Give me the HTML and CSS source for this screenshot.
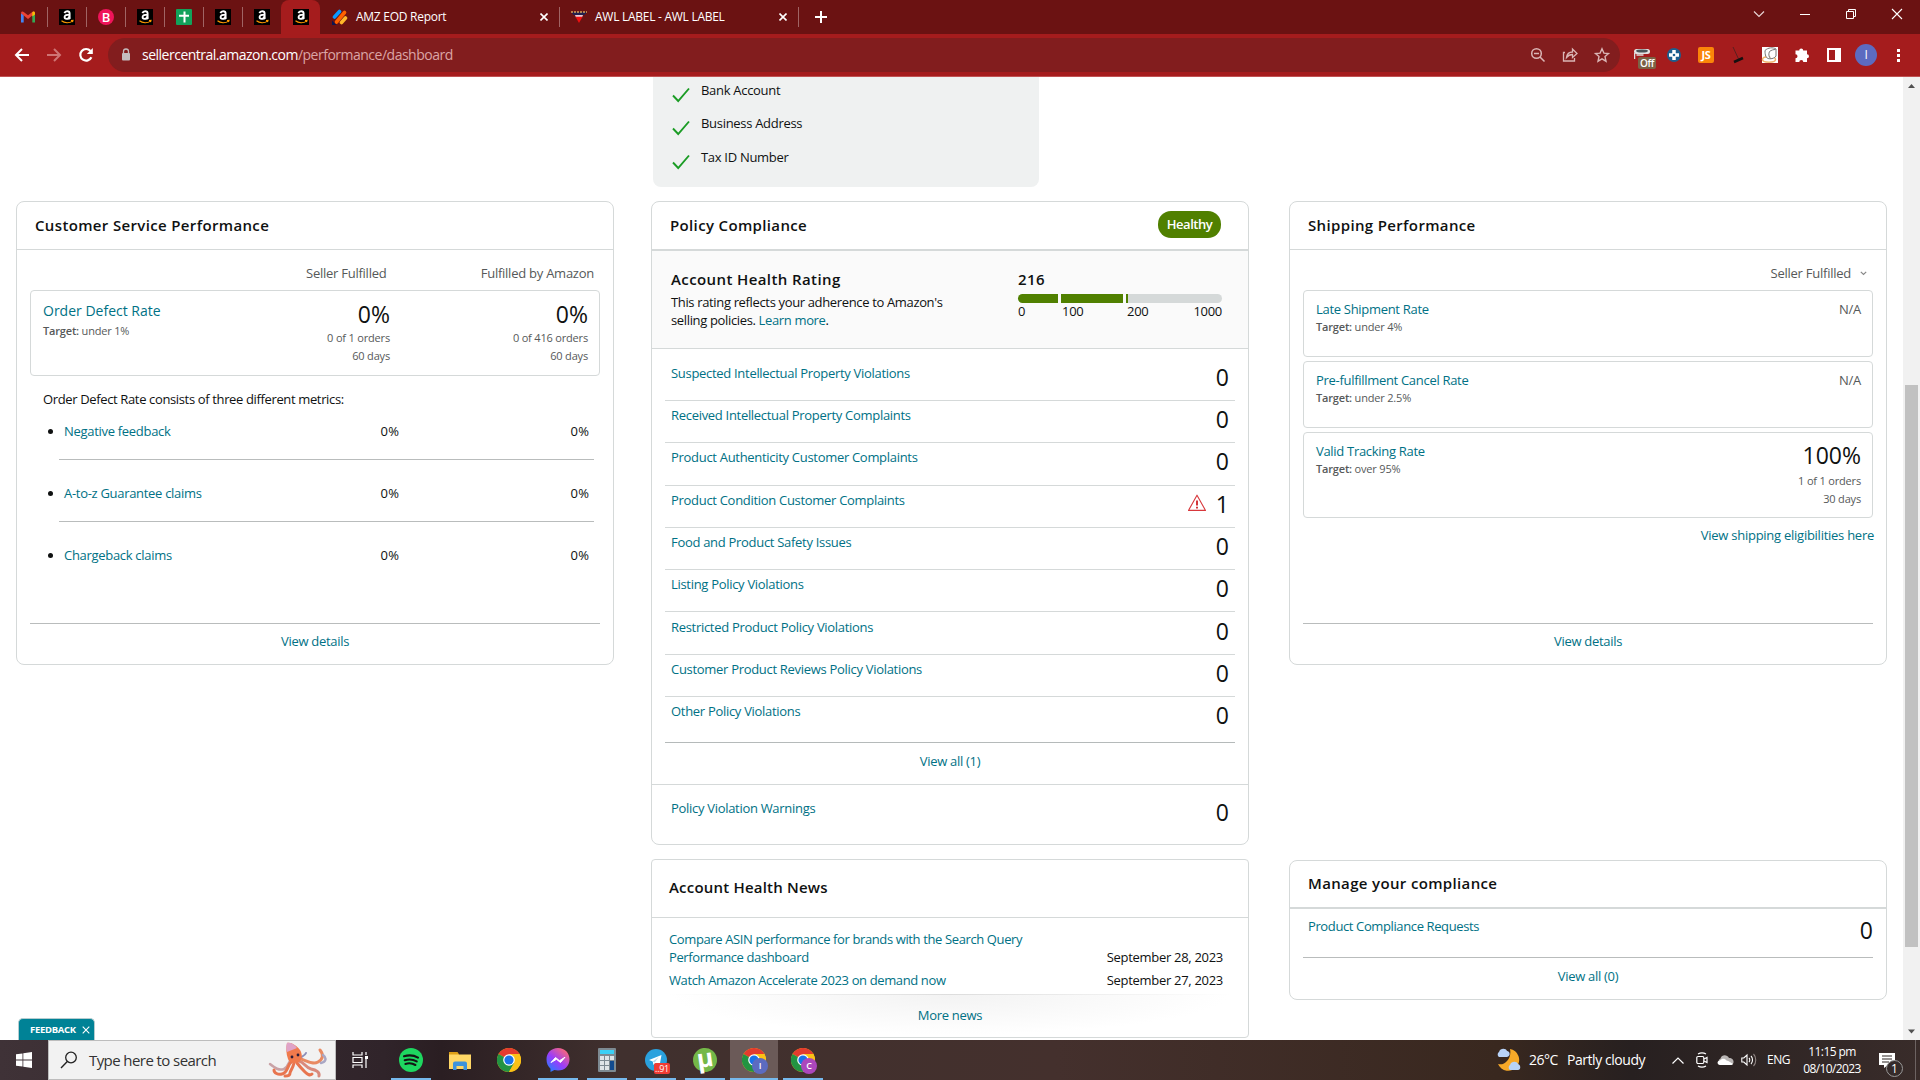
FILE: index.html
```html
<!DOCTYPE html>
<html lang="en">
<head>
  <meta charset="UTF-8">
  <meta name="viewport" content="width=device-width, initial-scale=1.0">
  <title>Account Health</title>
  <link rel="stylesheet" href="styles.css">
</head>
<body>
  <!-- Shared icons -->
  <svg class="sprite" aria-hidden="true">
    <symbol id="amazon" viewBox="0 0 16 16">
      <rect width="16" height="16" fill="#000"/>
      <path d="M5.4 4.2C5.9 2.9 7 2.3 8.2 2.3c1.6 0 2.4.9 2.4 2.3v3.6c0 .8.2 1.2.6 1.7M10.4 5.6C7.6 5.6 5.6 6.3 5.6 8.100c0 1.2.8 1.8 1.8 1.8 1.5 0 3-1.1 3-3" fill="none" stroke="#fff" stroke-width="1.9"/>
      <path d="M2.5 11.8c3 2.4 8 2.6 11 .3M12 11.500l2-.1-.5 1.800" fill="none" stroke="#f90" stroke-width="1.1"/>
    </symbol>
    <symbol id="check" viewBox="0 0 18 16">
      <path d="M1 8.5l5.200 5.500L17 1.500" fill="none" stroke="#1a9c24" stroke-width="1.9"/>
    </symbol>
    <symbol id="chrome" viewBox="0 0 24 24">
      <circle cx="12" cy="12" r="12" fill="#fbc116"/>
      <path d="M12 12L1.600 6A12 12 0 0 1 22.400 6z" fill="#e33b2e"/>
      <path d="M1.600 6A12 12 0 0 0 12 24l5.200-9z" fill="#229342"/>
      <path d="M12 6h10.400A12 12 0 0 1 12 24l5.200-9z" fill="#fbc116"/>
      <circle cx="12" cy="12" r="5.800" fill="#fff"/>
      <circle cx="12" cy="12" r="4.600" fill="#1a73e8"/>
    </symbol>
  </svg>

  <!-- Browser tabs -->
  <div class="tab-strip">
    <div class="pinned">
      <svg width="16" height="16" viewBox="0 0 16 16"><path d="M1 13.500V4l2.700 2v7.500z" fill="#4285f4"/><path d="M15 13.500V4l-2.700 2v7.500z" fill="#34a853"/><path d="M1 4.300C1 2.500 2.600 2 3.700 3L8 6.200 12.300 3C13.400 2 15 2.500 15 4.300L8 10z" fill="#ea4335"/><path d="M12.300 3C13.400 2 15 2.500 15 4.300V5.500l-2.700 2z" fill="#fbbc04"/></svg>
    </div>
    <div class="pinned"><svg width="16" height="16"><use href="#amazon"/></svg></div>
    <div class="pinned"><span class="fav-b">B</span></div>
    <div class="pinned"><svg width="16" height="16"><use href="#amazon"/></svg></div>
    <div class="pinned">
      <svg width="16" height="16" viewBox="0 0 16 16"><rect width="16" height="16" rx="1" fill="#12a25b"/><path d="M8.500 2.500v11M3 6.800h10" stroke="#fff" stroke-width="2"/></svg>
    </div>
    <div class="pinned"><svg width="16" height="16"><use href="#amazon"/></svg></div>
    <div class="pinned last"><svg width="16" height="16"><use href="#amazon"/></svg></div>
    <div class="pinned active"><svg width="16" height="16"><use href="#amazon"/></svg></div>
    <div class="tab first">
      <svg width="16" height="16" viewBox="0 0 16 16"><g stroke-width="3.600" stroke-linecap="round"><path d="M2.500 8l5-5.500" stroke="#0a99ff"/><path d="M4.500 13l8-9.500" stroke="#ff6100"/><path d="M9.500 13.500l4-4.500" stroke="#ffb629"/></g><path d="M0 11.500L4.500 16H0z" fill="#0a1551"/></svg>
      <span class="tab-name">AMZ EOD Report</span>
      <svg class="tab-close" width="8" height="8" viewBox="0 0 8 8"><path d="M.5.5l7 7M7.500.5l-7 7" stroke="#fff" stroke-width="1.600"/></svg>
    </div>
    <div class="tab">
      <svg width="16" height="16" viewBox="0 0 16 16"><path d="M0 3h16l-2.500 3h-11z" fill="#23204d"/><path d="M0 3h16" stroke="#d7a45a" stroke-width="1.500" stroke-dasharray="2 1"/><path d="M4 6h8l-1 2.500H5z" fill="#e9c8d4"/><path d="M4.500 7.800h7L8 14z" fill="#f01010"/></svg>
      <span class="tab-name">AWL LABEL - AWL LABEL</span>
      <svg class="tab-close" width="8" height="8" viewBox="0 0 8 8"><path d="M.5.5l7 7M7.500.5l-7 7" stroke="#fff" stroke-width="1.600"/></svg>
    </div>
    <svg class="new-tab" width="12" height="12" viewBox="0 0 12 12"><path d="M6 0v12M0 6h12" stroke="#fff" stroke-width="2"/></svg>
    <div class="window-controls">
      <svg width="46" height="28" viewBox="0 0 46 28"><path d="M18 11.500l5 5 5-5" fill="none" stroke="#e8d4d4" stroke-width="1.200"/></svg>
      <svg width="46" height="28" viewBox="0 0 46 28"><path d="M18 14.500h10" stroke="#fff"/></svg>
      <svg width="46" height="28" viewBox="0 0 46 28"><path d="M18.500 11.500h7v7h-7zM20.500 11.500v-2h7v7h-2" fill="none" stroke="#fff"/></svg>
      <svg width="46" height="28" viewBox="0 0 46 28"><path d="M18 9l10 10M28 9L18 19" stroke="#fff" stroke-width="1.100"/></svg>
    </div>
  </div>

  <!-- Address bar -->
  <div class="toolbar">
    <div class="nav-buttons">
      <svg width="32" height="32" viewBox="0 0 32 32"><path d="M23 16H10.500M16 10l-6 6 6 6" fill="none" stroke="#fff" stroke-width="2"/></svg>
      <svg width="32" height="32" viewBox="0 0 32 32"><path d="M9 16h12.500M16 10l6 6-6 6" fill="none" stroke="#cf7474" stroke-width="2"/></svg>
      <svg width="32" height="32" viewBox="0 0 32 32"><path d="M21.400 18.200A5.800 5.800 0 1 1 20.500 12" fill="none" stroke="#fff" stroke-width="2.200"/><path d="M22.800 9v6h-6z" fill="#fff"/></svg>
    </div>
    <div class="omnibox">
      <svg width="10" height="14" viewBox="0 0 10 14"><rect x="1" y="5" width="8" height="7.500" rx="1" fill="#c4bcbe"/><path d="M2.500 5.500V3.500a2.500 2.500 0 0 1 5 0v2" fill="none" stroke="#c4bcbe" stroke-width="1.300"/></svg>
      <span class="url">sellercentral.amazon.com<span class="path">/performance/dashboard</span></span>
      <div class="omni-actions">
        <svg width="32" height="32" viewBox="0 0 32 32"><g fill="none" stroke="#dab5b5" stroke-width="1.500"><circle cx="14.500" cy="14.500" r="4.800"/><path d="M18 18l4.500 4.500M12 14.500h5"/></g></svg>
        <svg width="32" height="32" viewBox="0 0 32 32"><g fill="none" stroke="#dab5b5" stroke-width="1.300"><path d="M11 13.500H9.500v8.500h11v-3"/><path d="M12.500 18.500c.5-4 3-5.500 6-5.500v-3l4.500 4.500-4.500 4v-3c-2.500 0-4.500 1-6 3z"/></g></svg>
        <svg width="32" height="32" viewBox="0 0 32 32"><path d="M16 9.800l1.900 4.300 4.600.4-3.500 3.100 1 4.600-4-2.400-4 2.400 1-4.600-3.500-3.100 4.600-.4z" fill="none" stroke="#dab5b5" stroke-width="1.400"/></svg>
      </div>
    </div>
    <div class="extensions">
      <div class="ext-off">
        <svg width="16" height="14" viewBox="0 0 16 14"><rect y="1" width="16" height="5" rx="2.500" fill="#e3e3e3"/><ellipse cx="8" cy="3" rx="6" ry="1.600" fill="#4a5458"/><path d="M.5 5v6M2.500 7h7" stroke="#ddd" stroke-width="1.500"/></svg>
        <span class="off-label">Off</span>
      </div>
      <svg width="32" height="32" viewBox="0 0 32 32"><circle cx="16" cy="16" r="7" fill="#1c5f8f"/><path d="M16 11v10M11 16h10" stroke="#fff" stroke-width="3.500"/><circle cx="16" cy="16" r="1.300" fill="#1c5f8f"/></svg>
      <div class="ext"><span class="ext-js">JS</span></div>
      <svg width="32" height="32" viewBox="0 0 32 32"><path d="M11 8l6 13" stroke="#5a2020"/><path d="M12 23l9-4" stroke="#151010" stroke-width="2.500"/></svg>
      <svg width="32" height="32" viewBox="0 0 32 32"><rect x="8" y="8" width="16" height="16" fill="#fff"/><ellipse cx="15" cy="20.500" rx="6.500" ry="2.700" fill="none" stroke="#f1b36c" stroke-width="1.500"/><path d="M11 11.500c3-3 8-3.500 11-1.500v7c-2 3-6 3-8 2.500-2-1-3-3-3-8zM15.500 12.500c-1 2-1 5 1 7M15.500 12.500c2-1.500 4-2 6-2" fill="#fff" stroke="#777"/></svg>
      <svg width="32" height="32" viewBox="0 0 32 32"><path d="M13.200 11.500a2 2 0 0 1 4 0h3.800v3.800a2 2 0 0 1 0 4V23h-3.700a2 2 0 0 0-4 0H9.500v-3.700a2 2 0 0 0 0-4v-3.800z" fill="#fff"/></svg>
      <svg width="32" height="32" viewBox="0 0 32 32"><path d="M10 10h12v12H10z" fill="none" stroke="#fff" stroke-width="2"/><path d="M17 10h5v12h-5z" fill="#fff"/></svg>
      <div class="ext"><span class="profile">I</span></div>
      <svg width="32" height="32" viewBox="0 0 32 32"><g fill="#fff"><rect x="15" y="10" width="3" height="3"/><rect x="15" y="15" width="3" height="3"/><rect x="15" y="20" width="3" height="3"/></g></svg>
    </div>
  </div>

  <!-- Page -->
  <div class="viewport">
    <main class="page">
      <ul class="verified">
        <li><svg width="18" height="16"><use href="#check"/></svg><span>Bank Account</span></li>
        <li><svg width="18" height="16"><use href="#check"/></svg><span>Business Address</span></li>
        <li><svg width="18" height="16"><use href="#check"/></svg><span>Tax ID Number</span></li>
      </ul>

      <div class="columns">
        <!-- Customer service -->
        <div class="column">
          <section class="card tall">
            <h2 class="card-title">Customer Service Performance</h2>
            <div class="column-heads">
              <span>Seller Fulfilled</span>
              <span class="head-fba">Fulfilled by Amazon</span>
            </div>
            <div class="metric odr">
              <div class="metric-name">
                <a href="#" class="big">Order Defect Rate</a>
                <p><b>Target:</b> under 1%</p>
              </div>
              <div class="metric-value"><strong>0%</strong><p>0 of 1 orders</p><p>60 days</p></div>
              <div class="metric-value fba"><strong>0%</strong><p>0 of 416 orders</p><p>60 days</p></div>
            </div>
            <p class="consists">Order Defect Rate consists of three different metrics:</p>
            <ul class="submetrics">
              <li><a href="#">Negative feedback</a><span>0%</span><span>0%</span></li>
              <li><a href="#">A-to-z Guarantee claims</a><span>0%</span><span>0%</span></li>
              <li><a href="#">Chargeback claims</a><span>0%</span><span>0%</span></li>
            </ul>
            <div class="card-footer"><a href="#">View details</a></div>
          </section>
        </div>

        <!-- Policy compliance -->
        <div class="column">
          <section class="card policy">
            <h2 class="card-title thick">Policy Compliance<span class="healthy">Healthy</span></h2>
            <div class="rating">
              <div class="rating-text">
                <h3>Account Health Rating</h3>
                <p>This rating reflects your adherence to Amazon's selling policies. <a href="#">Learn more</a>.</p>
              </div>
              <div class="rating-score">
                <h3>216</h3>
                <div class="bar"><i class="s1"></i><i class="s2"></i><i class="s3"></i><i class="rest"></i></div>
                <div class="scale"><span class="n0">0</span><span class="n100">100</span><span>200</span><span class="n1000">1000</span></div>
              </div>
            </div>
            <ul class="violations">
              <li><a href="#">Suspected Intellectual Property Violations</a><strong>0</strong></li>
              <li><a href="#">Received Intellectual Property Complaints</a><strong>0</strong></li>
              <li><a href="#">Product Authenticity Customer Complaints</a><strong>0</strong></li>
              <li><a href="#">Product Condition Customer Complaints</a>
                <svg class="warn" width="20" height="18" viewBox="0 0 20 18"><path d="M10 1.200l8.500 15.200h-17z" fill="none" stroke="#d8383c" stroke-width="1.100" stroke-linejoin="round"/><path d="M10 6.500v5M10 12.700v1.800" stroke="#d01f24" stroke-width="1.800"/></svg>
                <strong>1</strong></li>
              <li><a href="#">Food and Product Safety Issues</a><strong>0</strong></li>
              <li><a href="#">Listing Policy Violations</a><strong>0</strong></li>
              <li><a href="#">Restricted Product Policy Violations</a><strong>0</strong></li>
              <li><a href="#">Customer Product Reviews Policy Violations</a><strong>0</strong></li>
              <li><a href="#">Other Policy Violations</a><strong>0</strong></li>
            </ul>
            <div class="view-all"><a href="#">View all (1)</a></div>
            <div class="warnings"><a href="#">Policy Violation Warnings</a><strong>0</strong></div>
          </section>

          <section class="card news">
            <h2 class="card-title">Account Health News</h2>
            <div class="news-item"><a href="#">Compare ASIN performance for brands with the Search Query Performance dashboard</a><span>September 28, 2023</span></div>
            <div class="news-item"><a href="#">Watch Amazon Accelerate 2023 on demand now</a><span>September 27, 2023</span></div>
            <div class="more-news"><a href="#">More news</a></div>
          </section>
        </div>

        <!-- Shipping -->
        <div class="column">
          <section class="card tall">
            <h2 class="card-title">Shipping Performance</h2>
            <div class="column-heads select">
              <span>Seller Fulfilled</span>
              <svg width="7" height="5" viewBox="0 0 7 5"><path d="M.8.8l2.700 2.700L6.200.8" fill="none" stroke="#888" stroke-width="1.200"/></svg>
            </div>
            <div class="metric">
              <div class="metric-name"><a href="#">Late Shipment Rate</a><p><b>Target:</b> under 4%</p></div>
              <div class="metric-value na">N/A</div>
            </div>
            <div class="metric">
              <div class="metric-name"><a href="#">Pre-fulfillment Cancel Rate</a><p><b>Target:</b> under 2.5%</p></div>
              <div class="metric-value na">N/A</div>
            </div>
            <div class="metric tracking">
              <div class="metric-name"><a href="#">Valid Tracking Rate</a><p><b>Target:</b> over 95%</p></div>
              <div class="metric-value"><strong>100%</strong><p>1 of 1 orders</p><p>30 days</p></div>
            </div>
            <div class="eligibility"><a href="#">View shipping eligibilities here</a></div>
            <div class="card-footer"><a href="#">View details</a></div>
          </section>

          <section class="card manage">
            <h2 class="card-title thick">Manage your compliance</h2>
            <div class="manage-row"><a href="#">Product Compliance Requests</a><strong>0</strong></div>
            <div class="view-all"><a href="#">View all (0)</a></div>
          </section>
        </div>
      </div>

      <div class="feedback">FEEDBACK
        <svg width="8" height="8" viewBox="0 0 8 8"><path d="M.7.7l6.600 6.600M7.300.7L.7 7.300" stroke="#fff" stroke-width="1.100"/></svg>
      </div>
    </main>
    <div class="scrollbar">
      <svg width="17" height="17" viewBox="0 0 17 17"><path d="M5 11l3.500-4 3.500 4z" fill="#505050"/></svg>
      <div class="thumb"></div>
      <svg class="down" width="17" height="17" viewBox="0 0 17 17"><path d="M5 6.500l3.500 4 3.500-4z" fill="#505050"/></svg>
    </div>
  </div>

  <!-- Windows taskbar -->
  <div class="taskbar">
    <div class="start">
      <svg width="16" height="16" viewBox="0 0 16 16"><path d="M0 2.300l6.500-.9v6.100H0zM7.300 1.200L16 0v7.500H7.300zM0 8.400h6.500v6.200L0 13.700zM7.300 8.400H16V16l-8.700-1.200z" fill="#fff"/></svg>
    </div>
    <div class="search">
      <svg width="18" height="18" viewBox="0 0 18 18"><circle cx="11" cy="6.500" r="5.300" fill="none" stroke="#222" stroke-width="1.300"/><path d="M7.300 10.500L1 17" stroke="#222" stroke-width="1.400"/></svg>
      <span>Type here to search</span>
      <svg class="octopus" width="60" height="36" viewBox="0 0 60 36">
        <g fill="none" stroke="#e8754f" stroke-width="3" stroke-linecap="round">
          <path d="M25 17c-4 2-3 8-8 10S8 26 3 22" stroke="#c9a2a6" stroke-width="2.500"/>
          <path d="M25 19c-5 4-4 12-10 13-4 1-8-1-8-4"/>
          <path d="M27 21c-1 5-4 8-4 10s-2 3-5 3"/>
          <path d="M30 21c3 4 5 6 8 9s5 4 7 2"/>
          <path d="M32 19c5 1 7 7 12 8s9 3 8 7" stroke="#d98a7c"/>
          <path d="M34 17c6 2 12 6 17 3s6-7 2-12" stroke="#e98a62"/>
          <path d="M56 13c4 3 3 7-2 8" stroke="#a9a7c4" stroke-width="2.500"/>
          <path d="M31 17c4-3 7-3 8-6" stroke="#8e8fb8" stroke-width="2"/>
        </g>
        <path d="M20 1c4-1 10 3 13 7 3 5 2 10-1 12-4 2-10 1-11-3-2-5-2-11-1-16z" fill="#f07a4c"/>
        <path d="M20 1c4-1 8 2 10 5-3 1-7 3-10 4-1-3-1-6 0-9z" fill="#dfa3c8"/>
        <circle cx="25" cy="15" r="1.400" fill="#2b1d3a"/><circle cx="31" cy="13" r="1.400" fill="#2b1d3a"/>
      </svg>
    </div>
    <div class="apps">
      <div class="app task-view"><svg width="16" height="16" viewBox="0 0 16 16"><path d="M1 0v3h9V0M1 16v-3h9v3M1 5.500h9v5H1zM14 0v3M14 7v9" fill="none" stroke="#fff" stroke-width="1.200"/><rect x="13" y="4" width="3" height="3" fill="#fff"/></svg></div>
      <div class="app running"><svg width="24" height="24" viewBox="0 0 24 24"><circle cx="12" cy="12" r="12" fill="#1ed760"/><path d="M5 8.300c5-1.500 10-1 14 1.300M5.700 12.200c4-1.200 8.500-.8 12 1.200M6.400 15.900c3.500-1 7-.7 10 1.100" fill="none" stroke="#141414" stroke-width="2.100" stroke-linecap="round"/></svg></div>
      <div class="app"><svg width="22" height="19" viewBox="0 0 22 19"><path d="M0 1.500h8l2 2h12V18H0z" fill="#ffd766"/><path d="M0 1h8.500L10 3.500H0z" fill="#dd9f17"/><path d="M4 18v-5.500a2 2 0 0 1 2-2h10a2 2 0 0 1 2 2V19h-3.500v-4h-7v4H4z" fill="#3d93dc"/></svg></div>
      <div class="app"><svg width="24" height="24"><use href="#chrome"/></svg></div>
      <div class="app running"><svg width="24" height="24" viewBox="0 0 24 24"><defs><linearGradient id="msg" x1="0" y1="1" x2=".8" y2="0"><stop offset="0" stop-color="#0a8cff"/><stop offset=".5" stop-color="#9a3cfb"/><stop offset="1" stop-color="#ff6a72"/></linearGradient></defs><path d="M12 0c7 0 11.500 5 11.500 11.300S19 22.600 12 22.600c-1.500 0-2.500-.2-3.600-.5L4.500 24v-3.300C2 18.500.5 15.500.5 11.300.5 5 5 0 12 0z" fill="url(#msg)"/><path d="M5 14.500l4.500-5 4 3.200 5.500-3.500-4.500 5.300-4-3.200z" fill="#fff" stroke="#fff"/></svg></div>
      <div class="app running"><svg width="18" height="24" viewBox="0 0 18 24"><rect width="18" height="24" rx="1" fill="#7d8a92"/><rect x="2" y="2" width="14" height="4" fill="#3bd0f5"/><g fill="#dfe5e8"><rect x="2" y="8" width="4" height="4"/><rect x="7" y="8" width="4" height="4"/><rect x="12" y="8" width="4" height="4"/><rect x="2" y="13" width="4" height="4"/><rect x="7" y="13" width="4" height="4"/><rect x="2" y="18" width="4" height="4"/><rect x="7" y="18" width="4" height="4"/></g><rect x="12" y="13" width="4" height="9" fill="#124b8f"/></svg></div>
      <div class="app running"><svg width="22" height="22" viewBox="0 0 22 22"><circle cx="11" cy="11" r="11" fill="#2aa1de"/><path d="M4 11l12.500-5-2 11-4-3-2 2-.8-3.500z" fill="#fff"/><path d="M7.700 12.500l6-4.500-4 5.500" fill="#b9d8ea"/></svg><span class="count">..91</span></div>
      <div class="app running"><span class="utorrent">µ</span></div>
      <div class="app running current"><svg width="24" height="24"><use href="#chrome"/></svg><span class="who">I</span></div>
      <div class="app running"><svg width="24" height="24"><use href="#chrome"/></svg><span class="who purple">C</span></div>
    </div>
    <div class="tray">
      <svg class="weather" width="25" height="24" viewBox="0 0 25 24"><path d="M14 1a11 11 0 1 1-12 15c7 2 14-6 12-15z" fill="#f7a928"/><path d="M3 9a3 3 0 0 1 0-5c1-4 7-4 8-1 3 0 4 5 0 6z" fill="#b8d3f8"/><path d="M14 22a3 3 0 0 1 0-5c1-4 7-4 8-1 3 1 3 6 0 6z" fill="#b8d3f8"/></svg>
      <span class="temp">26°C</span>
      <span class="sky">Partly cloudy</span>
      <svg class="up" width="12" height="7" viewBox="0 0 12 7"><path d="M.5 6.500L6 1l5.500 5.500" fill="none" stroke="#fff" stroke-width="1.200"/></svg>
      <svg class="meet" width="12" height="16" viewBox="0 0 12 16"><g fill="none" stroke="#fff" stroke-width="1.200"><rect x=".8" y="4.500" width="7" height="7" rx="1.200"/><path d="M8 7l3-1.500v5L8 9M2 2c2.500-1.500 5.500-1.500 8 0M2 14c2.500 1.500 5.500 1.500 8 0"/></g></svg>
      <svg class="cloud" width="17" height="12" viewBox="0 0 17 12"><path d="M4 11a3.500 3.500 0 0 1-.5-6.500C4.500.5 10 0 12 4c3 0 5 2 4.500 4.500C16 11 14 11 13 11z" fill="#b9b5b4"/><path d="M3 11c-3 0-3.500-4 0-4.500C5 4 8 4.500 9.500 6.500 12 7 14 9 16 10c-1 1-2 1-3 1z" fill="#fff"/></svg>
      <svg class="speaker" width="16" height="14" viewBox="0 0 16 14"><g fill="none" stroke="#fff" stroke-width="1.100"><path d="M.8 5v4h2L6 12V2L2.800 5zM8 5c1 1 1 3 0 4M10 3c2 2 2 6 0 8"/><path d="M12.500 1c3 3 3 9 0 12" stroke="#8f8583"/></g></svg>
      <span class="lang">ENG</span>
      <div class="clock">11:15 pm<br>08/10/2023</div>
      <div class="notify"><svg width="16" height="15" viewBox="0 0 16 15"><path d="M0 0h16v12H9l-4 3v-3H0z" fill="#fff"/><path d="M3 3h10M3 6h10M3 9h7" stroke="#2d2523" stroke-width="1.200"/></svg><span>1</span></div>
      <div class="show-desktop"></div>
    </div>
  </div>
</body>
</html>
```

FILE: styles.css
```css
* {
  margin: 0;
  padding: 0;
  box-sizing: border-box;
}

body {
  width: 1920px;
  height: 1080px;
  overflow: hidden;
  background: #fff;
  color: #0f1111;
  font-family: 'Open Sans', 'Noto Sans', sans-serif;
  font-size: 13px;
  line-height: 18px;
  letter-spacing: -0.3px;
}

ul {
  list-style: none;
}

a {
  color: #007185;
  text-decoration: none;
}

svg {
  display: block;
  flex: none;
}

.sprite {
  position: absolute;
  width: 0;
  height: 0;
}

/* Tabs */
.tab-strip {
  display: flex;
  align-items: center;
  height: 34px;
  padding-left: 9px;
  background: #6b1212;
  color: #fff;
  font-size: 12px;
  letter-spacing: -0.27px;
}

.pinned {
  display: flex;
  align-items: center;
  justify-content: center;
  width: 39px;
  height: 20px;
  border-right: 1px solid #a06464;
}

.pinned.last {
  width: 38px;
  border-right-color: transparent;
}

.pinned.active {
  height: 34px;
  border: 0;
  border-radius: 8px 8px 0 0;
  background: #a51c1d;
}

.fav-b {
  width: 16px;
  height: 16px;
  border-radius: 8px;
  background: #f0145a;
  font-size: 13px;
  font-weight: 600;
  line-height: 16px;
  text-align: center;
}

.tab {
  display: flex;
  align-items: center;
  width: 239px;
  height: 20px;
  padding: 0 11px;
  border-right: 1px solid #a06464;
}

.tab.first {
  width: 240px;
  padding-left: 12px;
}

.tab-name {
  margin-left: 8px;
}

.tab-close {
  margin-left: auto;
}

.new-tab {
  margin-left: 16px;
}

.window-controls {
  display: flex;
  height: 28px;
  margin: 0 0 6px auto;
}

/* Address bar */
.toolbar {
  display: flex;
  align-items: center;
  height: 43px;
  background: #a51c1d;
  border-bottom: 1px solid #c05253;
}

.nav-buttons {
  display: flex;
  width: 108px;
  padding-left: 6px;
}

.omnibox {
  display: flex;
  align-items: center;
  width: 1512px;
  height: 34px;
  padding: 0 2px 0 13px;
  border-radius: 17px;
  background: #821d1e;
}

.url {
  margin-left: 11px;
  color: #fff;
  font-size: 14px;
  letter-spacing: -0.5px;
}

.path {
  color: #dba5a6;
}

.omni-actions {
  display: flex;
  margin-left: auto;
}

.extensions {
  display: flex;
  padding-left: 6px;
}

.ext,
.ext-off {
  display: flex;
  align-items: center;
  justify-content: center;
  width: 32px;
  height: 32px;
  color: #fff;
}

.ext-off {
  position: relative;
}

.off-label {
  position: absolute;
  left: 12px;
  top: 18px;
  width: 18px;
  height: 12px;
  border-radius: 2px;
  background: #7b6245;
  font-size: 10px;
  font-weight: 600;
  line-height: 12px;
  text-align: center;
}

.ext-js {
  width: 16px;
  height: 16px;
  border-radius: 2px;
  background: #fb8509;
  font-size: 11px;
  font-weight: 700;
  line-height: 16px;
  text-align: center;
}

.profile {
  width: 22px;
  height: 22px;
  border-radius: 11px;
  background: #5c6bc0;
  font-size: 12px;
  line-height: 22px;
  text-align: center;
}

/* Page */
.viewport {
  display: flex;
  height: 963px;
}

.page {
  position: relative;
  width: 1903px;
  overflow: hidden;
}

.verified {
  width: 386px;
  height: 110px;
  margin-left: 653px;
  padding: 4px 0 0 19px;
  border-radius: 0 0 8px 8px;
  background: #eff1f1;
}

.verified li {
  display: flex;
  height: 33.4px;
}

.verified svg {
  margin: 6px 11px 0 0;
}

.columns {
  display: grid;
  grid-template-columns: 635px 638px 598px;
  margin: 14px 0 0 16px;
}

.card {
  width: 598px;
  border: 1px solid #d5d9d9;
  border-radius: 8px;
  background: #fff;
}

.card.tall {
  display: flex;
  flex-direction: column;
  height: 464px;
}

.card-title {
  display: flex;
  justify-content: space-between;
  height: 48px;
  padding: 0 27px 0 18px;
  border-bottom: 1px solid #d5d9d9;
  font-size: 15px;
  font-weight: 600;
  line-height: 46px;
  letter-spacing: 0.35px;
}

.card-title.thick {
  height: 49px;
  border-bottom-width: 2px;
}

.column-heads {
  display: flex;
  padding: 14px 19px 8px 289px;
  color: #565959;
  letter-spacing: -0.25px;
}

.head-fba {
  margin-left: auto;
}

.column-heads.select {
  align-items: center;
  justify-content: flex-end;
  padding-left: 0;
}

.column-heads.select svg {
  margin-left: 9px;
}

.metric {
  display: flex;
  justify-content: space-between;
  height: 67px;
  margin: 0 13px 4px;
  padding: 9px 11px 0 12px;
  border: 1px solid #d5d9d9;
  border-radius: 4px;
}

.metric-name a {
  display: block;
}

.metric-name .big {
  font-size: 14px;
  line-height: 20px;
  letter-spacing: 0;
}

.metric p {
  color: #565959;
  font-size: 11px;
  line-height: 18px;
  letter-spacing: -0.18px;
}

.metric b {
  font-weight: 600;
}

.metric.odr,
.metric.tracking {
  height: 86px;
  margin-bottom: 0;
}

.metric.odr {
  padding-top: 10px;
}

.metric.odr .metric-name {
  width: 200px;
}

.metric.odr .metric-name p {
  margin-top: 1px;
}

.metric-value {
  text-align: right;
}

.metric strong {
  height: 28px;
  line-height: 26px;
}

.metric.tracking strong {
  height: 30px;
}

.odr .metric-value {
  width: 147px;
}

.odr .fba {
  width: 198px;
}

.metric-value.na {
  color: #565959;
}

strong {
  display: block;
  font-size: 23px;
  font-weight: 400;
  line-height: 27px;
  letter-spacing: 0;
}

.consists {
  margin: 14px 0 14px 26px;
  letter-spacing: -0.36px;
}

.submetrics {
  margin: 0 19px 0 42px;
}

.submetrics li {
  display: grid;
  grid-template-columns: 5px 157px 178px 190px;
  height: 38px;
  margin-bottom: 24px;
  border-bottom: 1px solid #b9bcbc;
}

.submetrics li:last-child {
  border: 0;
}

/* bullet hangs in the left margin */
.submetrics li::before {
  content: '';
  width: 5px;
  height: 5px;
  margin: 7px 0 0 -11px;
  border-radius: 3px;
  background: #0f1111;
}

.submetrics a {
  white-space: nowrap;
}

.submetrics span {
  letter-spacing: 0.1px;
  text-align: right;
}

.eligibility {
  margin: 8px 12px 0 0;
  letter-spacing: -0.26px;
  text-align: right;
}

.card-footer {
  height: 41px;
  margin: auto 13px 0;
  border-top: 1px solid #b9bcbc;
  line-height: 35px;
  text-align: center;
}

/* Policy compliance */
.policy {
  height: 644px;
}

.healthy {
  align-self: center;
  width: 63px;
  height: 27px;
  margin-bottom: 3px;
  border-radius: 13px;
  background: #508000;
  color: #fff;
  font-size: 13px;
  line-height: 27px;
  letter-spacing: -0.5px;
  text-align: center;
}

.rating {
  display: flex;
  height: 98px;
  padding: 18px 26px 0 19px;
  border-bottom: 1px solid #d5d9d9;
  background: #fafafa;
}

.rating h3 {
  font-size: 15px;
  font-weight: 600;
  line-height: 20px;
  letter-spacing: 0.4px;
}

.rating-text {
  width: 347px;
  padding-right: 60px;
}

.rating-text p {
  margin-top: 4px;
  letter-spacing: -0.35px;
}

.rating-score {
  width: 204px;
}

.bar {
  display: flex;
  gap: 3px;
  height: 9px;
  margin-top: 5px;
}

.bar i {
  background: #508000;
}

.bar .s1 {
  width: 40px;
  border-radius: 5px 0 0 5px;
}

.bar .s2 {
  width: 62px;
}

.bar .s3 {
  width: 2px;
}

.bar .rest {
  flex: 1;
  margin-left: -3px;
  border-radius: 0 5px 5px 0;
  background: #d5d9d9;
}

.scale {
  display: flex;
  line-height: 16px;
}

.scale .n0 {
  width: 44px;
}

.scale .n100 {
  width: 65px;
}

.scale .n1000 {
  margin-left: auto;
}

.violations {
  margin: 0 13px;
  padding-top: 9.7px;
}

.violations li {
  display: flex;
  height: 42.3px;
  padding: 5.2px 6px 0;
  border-bottom: 1px solid #d5d9d9;
}

.violations li:last-child {
  height: 46px;
  border-bottom-color: #b5baba;
}

.violations strong,
.warnings strong,
.manage-row strong {
  margin-left: auto;
}

.warn {
  margin: 3px -7px 0 auto;
}

.warn + strong {
  margin-left: 16px;
}

.view-all {
  line-height: 36px;
  text-align: center;
}

.policy .view-all {
  height: 42px;
  border-bottom: 1px solid #d5d9d9;
}

.warnings {
  display: flex;
  padding: 14px 19px 0;
}

/* News */
.news {
  height: 179px;
  margin-top: 14px;
  border-radius: 4px;
}

.news .card-title {
  height: 58px;
  margin-bottom: 12px;
  padding-left: 17px;
  line-height: 55px;
  letter-spacing: 0.2px;
}

.news-item {
  display: flex;
  align-items: flex-end;
  justify-content: space-between;
  margin-bottom: 5px;
  padding: 0 25px 0 17px;
}

.news-item a {
  width: 370px;
  letter-spacing: -0.38px;
}

.more-news {
  height: 41px;
  margin: 0 17px;
  background: radial-gradient(ellipse at 50% 0, #f3f3f3, #fff 70%);
  border-top: 1px solid #e8e8e8;
  border-image: linear-gradient(90deg, #fff, #ddd 50%, #fff) 1;
  line-height: 41px;
  text-align: center;
}

/* Manage compliance */
.manage {
  height: 140px;
  margin-top: 195px;
}

.manage .card-title {
  height: 48px;
  line-height: 45px;
}

.manage-row {
  display: flex;
  height: 49px;
  margin: 0 13px;
  padding: 8px 0 0 5px;
  border-bottom: 1px solid #b9bcbc;
}

.manage-row a {
  letter-spacing: -0.38px;
}

.feedback {
  position: absolute;
  left: 18px;
  bottom: 0;
  display: flex;
  align-items: center;
  gap: 6px;
  width: 77px;
  height: 22px;
  padding-left: 11px;
  border: 1px solid #b5cdd0;
  border-bottom: 0;
  border-radius: 5px 5px 0 0;
  background: #008296;
  color: #fff;
  font-size: 9.5px;
  font-weight: 700;
}

.scrollbar {
  display: flex;
  flex-direction: column;
  width: 17px;
  background: #f1f1f1;
}

.thumb {
  width: 13px;
  height: 562px;
  margin: 291px 0 0 2px;
  background: #c1c1c1;
}

.down {
  margin-top: auto;
}

/* Taskbar */
.taskbar {
  display: flex;
  height: 40px;
  background: linear-gradient(90deg, #3f3237 0, #30242a 20%, #2a1e22 23%, #40302e 32%, #44302d 55%, #39281f 78%, #272020 85%, #392c2a 100%);
  color: #fff;
}

.start {
  width: 48px;
  padding: 12px 16px;
}

.search {
  display: flex;
  align-items: center;
  width: 288px;
  padding-left: 11px;
  border: 1px solid #bdbdbd;
  background: #f2f2f2;
  color: #333;
  font-size: 15px;
  letter-spacing: -0.58px;
}

.search span {
  margin-left: 11px;
}

.octopus {
  margin: 0 8px 0 auto;
}

.apps {
  display: flex;
  gap: 1px;
}

.app {
  position: relative;
  display: flex;
  align-items: center;
  justify-content: center;
  width: 48px;
  height: 40px;
}

.app.task-view {
  width: 50px;
  padding-right: 2px;
}

.app.running::after {
  content: '';
  position: absolute;
  left: 4px;
  bottom: 0;
  width: 40px;
  height: 2px;
  background: #76b9ed;
}

.app.current {
  background: #6b5a58;
}

.app.current::after {
  left: 0;
  width: 48px;
}

.who {
  position: absolute;
  left: 22px;
  top: 18px;
  width: 16px;
  height: 16px;
  border-radius: 8px;
  background: #5c6bc0;
  font-size: 9px;
  font-weight: 600;
  line-height: 16px;
  text-align: center;
}

.who.purple {
  background: #ab47bc;
}

.count {
  position: absolute;
  left: 22px;
  top: 23px;
  width: 16px;
  height: 11px;
  border-radius: 2px;
  background: #f23c34;
  font-size: 9px;
  line-height: 11px;
  text-align: center;
}

.utorrent {
  width: 24px;
  height: 24px;
  border-radius: 12px;
  background: #74b848;
  font-size: 25px;
  font-weight: 700;
  line-height: 19px;
  text-align: center;
  transform: rotate(-8deg);
}

.tray {
  display: flex;
  align-items: center;
  margin-left: auto;
  letter-spacing: 0;
}

.temp {
  width: 38px;
  margin-left: 8px;
  font-size: 14px;
  letter-spacing: -0.5px;
}

.sky {
  width: 105px;
  font-size: 14px;
  letter-spacing: -0.45px;
}

.meet {
  margin-left: 12px;
}

.cloud {
  margin-left: 9px;
}

.speaker {
  margin-left: 7px;
}

.lang {
  width: 36px;
  margin-left: 10px;
  font-size: 12px;
  letter-spacing: -0.5px;
}

.clock {
  width: 58px;
  margin-top: -1px;
  font-size: 12px;
  line-height: 17px;
  letter-spacing: -0.6px;
  text-align: center;
  white-space: nowrap;
}

.notify {
  position: relative;
  margin-left: 18px;
}

.notify span {
  position: absolute;
  left: 7px;
  top: 7px;
  width: 17px;
  height: 17px;
  border: 1px solid #999;
  border-radius: 9px;
  background: #352b2a;
  font-size: 12px;
  line-height: 15px;
  text-align: center;
}

.show-desktop {
  width: 5px;
  height: 40px;
  margin-left: 20px;
  border-left: 1px solid #6d6362;
}
```
